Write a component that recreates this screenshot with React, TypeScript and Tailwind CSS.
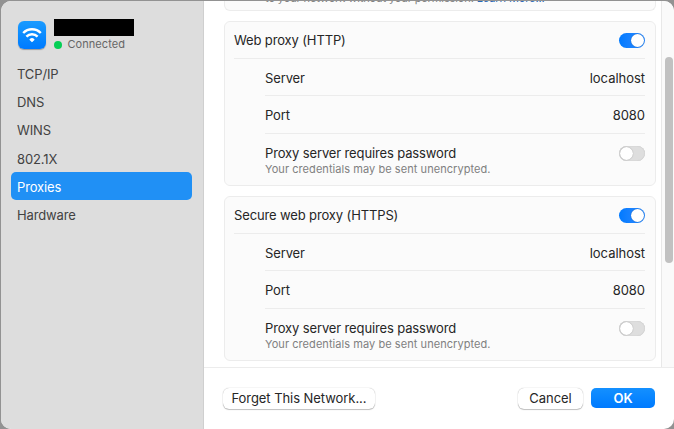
import React from "react";

const navItems = ["TCP/IP", "DNS", "WINS", "802.1X", "Proxies", "Hardware"];

function Toggle({ on }: { on: boolean }) {
  return (
    <span
      className={
        on
          ? "flex h-[15px] w-[26px] shrink-0 items-center justify-end rounded-full bg-linear-to-r from-[#007aff] to-[#2a8bff] p-px"
          : "flex h-[15px] w-[26px] shrink-0 items-center rounded-full bg-[#dedede] p-px shadow-[inset_0_0_1px_#aaa]"
      }
    >
      <span className="size-[13px] rounded-full bg-white shadow-[0_0_1px_rgba(0,0,0,0.4)]" />
    </span>
  );
}

function ValueRow({ label, value }: { label: string; value: string }) {
  return (
    <div className="ml-[31px] flex h-[37.5px] items-center justify-between border-b border-[#ececec] pt-[2px]">
      <span>{label}</span>
      <span className="tracking-[-0.03px]">{value}</span>
    </div>
  );
}

function ProxyCard({ title }: { title: string }) {
  return (
    <section className="h-[165.5px] shrink-0 rounded-md border border-[#ececec] bg-[#fbfbfb] pr-[10px] pl-[9px]">
      <div className="flex h-[37px] items-center justify-between border-b border-[#ececec]">
        <span>{title}</span>
        <span className="pt-[2px]">
          <Toggle on />
        </span>
      </div>
      <ValueRow label="Server" value="localhost" />
      <ValueRow label="Port" value="8080" />
      <div className="ml-[31px] flex justify-between pt-[11px]">
        <div>
          <div className="leading-4">Proxy server requires password</div>
          <div className="mt-px text-[11px] leading-[14px] tracking-[0.06px] text-[#808080]">
            Your credentials may be sent unencrypted.
          </div>
        </div>
        <div className="pt-px">
          <Toggle on={false} />
        </div>
      </div>
    </section>
  );
}

export default function App() {
  return (
    <div className="h-[429px] w-[674px] overflow-hidden bg-[#929292] pt-px pl-px font-['Inter',sans-serif] text-[13px] leading-4 tracking-[-0.13px] text-[#262626]">
      <div className="flex h-[428px] w-[673px] overflow-hidden rounded-[10px] bg-white">
        <aside className="w-[203px] shrink-0 border-r border-[#cfcfcf] bg-[#dddddd] pl-[10px]">
          <div className="flex h-[58px] pt-[18px] pl-[7px]">
            <div className="mt-[2px] flex size-7 items-center justify-center rounded-[6px] bg-linear-to-b from-[#1a9bff] to-[#007aff] shadow-[0_1px_1px_rgba(0,0,0,0.3)]">
              <svg viewBox="0 0 20 16" className="-mt-px h-4 w-5" fill="none" stroke="white" strokeWidth="2.4">
                <path d="M1.2 6a12.2 12.2 0 0 1 17.6 0" />
                <path d="M4.4 9.6a7.7 7.7 0 0 1 11.2 0" />
                <path d="M10 15.2 7.6 13q-.3-.6.2-1a3.4 3.4 0 0 1 4.4 0q.5.4.2 1Z" fill="white" stroke="none" />
              </svg>
            </div>
            <div className="ml-[8px]">
              <div className="h-[17px] w-[80px] bg-black" />
              <div className="mt-[1px] flex items-center text-[11px] leading-[15px] tracking-[0.06px] text-[#666666]">
                <span className="mr-[5.5px] size-2 rounded-full bg-[#05cf55]" />
                Connected
              </div>
            </div>
          </div>
          <nav className="w-[181px]">
            {navItems.map((item) => (
              <div
                key={item}
                className={
                  item === "Proxies"
                    ? "flex h-[28.2px] items-center rounded-[5px] bg-[#2090f5] pt-[2px] pl-[6px] text-white"
                    : "flex h-[28.2px] items-center pt-[2px] pl-[6px] text-[#424242]"
                }
              >
                {item}
              </div>
            ))}
          </nav>
        </aside>
        <main className="flex min-w-0 flex-1 flex-col">
          <div className="flex h-[367px] border-b border-[#ececec]">
            <div className="flex min-w-0 flex-1 flex-col gap-[9.5px] overflow-hidden pr-[5px] pl-[20px]">
              <section className="h-[10px] shrink-0 rounded-b-md border border-t-0 border-[#ececec] bg-[#fbfbfb] pl-[40px]">
                <div className="-mt-[10px] text-[11px] leading-[14px] tracking-[-0.11px] whitespace-nowrap text-[#808080]">
                  to your network without your permission. <span className="text-[#2868b8]">Learn More...</span>
                </div>
              </section>
              <ProxyCard title="Web proxy (HTTP)" />
              <ProxyCard title="Secure web proxy (HTTPS)" />
            </div>
            <div className="w-[13px] shrink-0 border-l border-[#e8e8e8] bg-[#fafafa] pt-[56px] pl-[3px]">
              <div className="h-[206px] w-2 rounded-full bg-[#c1c1c1]" />
            </div>
          </div>
          <footer className="flex h-[61px] items-center pr-[19px] pb-px pl-[19px]">
            <button className="h-[21px] w-[152px] rounded-[6px] bg-white tracking-[-0.06px] shadow-[0_0_1px_rgba(0,0,0,0.35),0_1px_1px_rgba(0,0,0,0.22)]">
              Forget This Network...
            </button>
            <button className="ml-auto h-[21px] w-[65px] rounded-[6px] bg-white tracking-[-0.06px] shadow-[0_0_1px_rgba(0,0,0,0.35),0_1px_1px_rgba(0,0,0,0.22)]">
              Cancel
            </button>
            <button className="ml-2 h-5 w-16 rounded-[5px] bg-linear-to-b from-[#1490ff] to-[#007aff] font-semibold text-white">
              OK
            </button>
          </footer>
        </main>
      </div>
    </div>
  );
}
